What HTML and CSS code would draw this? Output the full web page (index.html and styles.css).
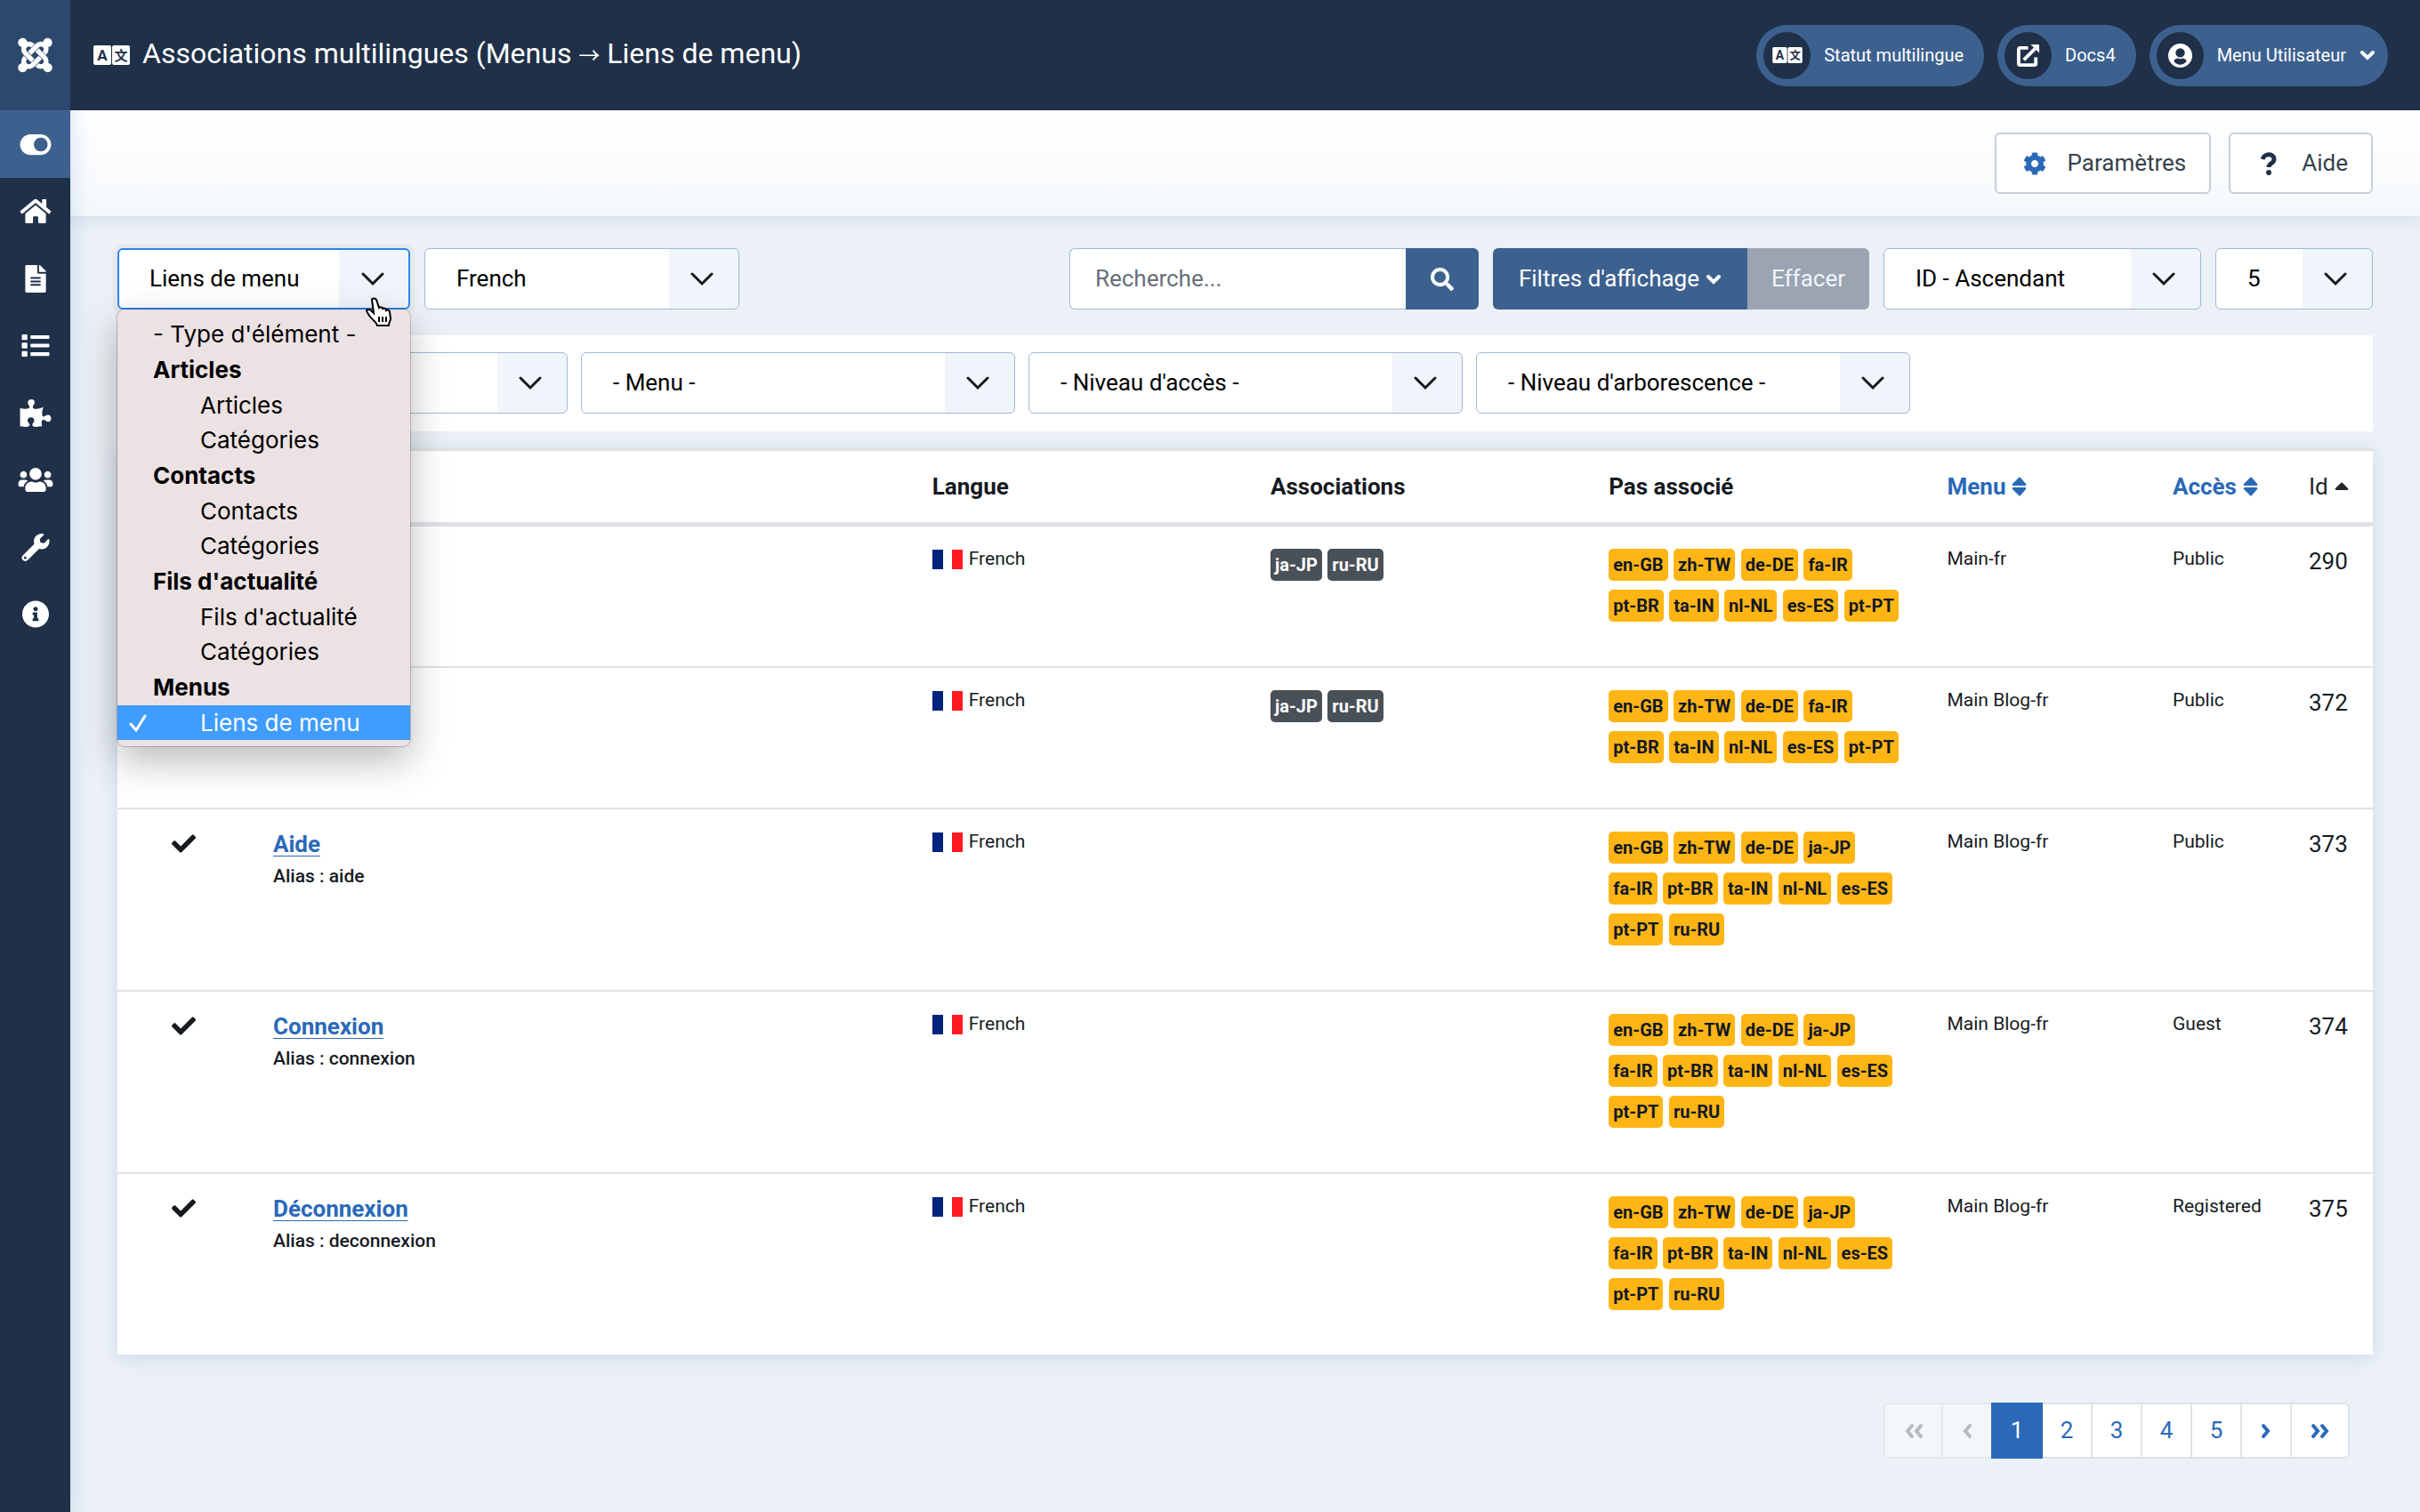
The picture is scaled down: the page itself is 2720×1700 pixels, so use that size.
FILE: index.html
```html
<!DOCTYPE html>
<html lang="fr">
<head>
  <meta charset="utf-8">
  <title>Associations multilingues</title>
  <link rel="stylesheet" href="styles.css">
</head>
<body>
  <!-- Icon definitions -->
  <svg class="sprite" aria-hidden="true">
    <symbol id="joomla" viewBox="0 0 448 512"><path d="M.6 92.1C.6 58.8 27.4 32 60.4 32c30 0 54.5 21.9 59.2 50.2 32.6-7.6 67.1.6 96.5 30l-44.3 44.3c-20.5-20.5-42.6-16.3-55.4-3.5-14.3 14.3-14.3 37.9 0 52.2l99.5 99.5-44 44.3c-87.7-87.2-49.7-49.7-99.8-99.7-26.8-26.5-35-64.8-24.8-98.9C20.4 144.6.6 120.7.6 92.1zm129.5 116.4l44.3 44.3c10-10 89.7-89.7 99.7-99.8 14.3-14.3 37.6-14.3 51.9 0 12.8 12.8 17 35-3.5 55.4l44 44.3c31.2-31.2 38.5-67.6 28.9-101.2 29.2-4.1 51.9-29.2 51.9-59.5 0-33.2-26.8-60.1-59.8-60.1-30.3 0-55.4 22.5-59.5 51.6-33.8-9.9-71.7-1.5-98.3 25.1-18.3 19.1-71.1 71.5-99.6 99.9zm266.3 152.2c8.2-32.7-.9-68.5-26.3-93.9-11.8-12.2 5 4.7-99.5-99.7l-44.3 44.3 99.7 99.7c14.3 14.3 14.3 37.6 0 51.9-12.8 12.8-35 17-55.4-3.5l-44 44.3c27.6 30.2 68 38.8 102.7 28 5.5 27.4 29.7 48.1 58.9 48.1 33 0 59.8-26.8 59.8-60.1 0-30.2-22.5-55-51.6-59.1zm-84.3-53.1l-44-44.3c-87 86.4-50.4 50.4-99.7 99.8-14.3 14.3-37.6 14.3-51.9 0-13.1-13.4-16.9-35.3 3.2-55.4l-44-44.3c-30.2 30.2-38 65.2-29.5 98.3-26.7 6-46.2 29.9-46.2 58.2C0 453.2 26.8 480 59.8 480c28.6 0 52.5-19.8 58.6-46.7 32.7 8.2 68.5-.6 94.2-26 32.1-32 12.2-12.4 99.5-99.7z"/></symbol>
    <symbol id="toggle" viewBox="0 0 576 512"><path d="M384 64H192C86 64 0 150 0 256s86 192 192 192h192c106 0 192-86 192-192S490 64 384 64zm0 320c-70.8 0-128-57.3-128-128 0-70.8 57.3-128 128-128 70.8 0 128 57.3 128 128 0 70.8-57.3 128-128 128z"/></symbol>
    <symbol id="home" viewBox="0 0 576 512"><path d="M280.37 148.26L96 300.11V464a16 16 0 0 0 16 16l112.06-.29a16 16 0 0 0 15.92-16V368a16 16 0 0 1 16-16h64a16 16 0 0 1 16 16v95.64a16 16 0 0 0 16 16.05L464 480a16 16 0 0 0 16-16V300L295.67 148.26a12.19 12.19 0 0 0-15.3 0zM571.6 251.47L488 182.56V44.05a12 12 0 0 0-12-12h-56a12 12 0 0 0-12 12v72.61L318.47 43a48 48 0 0 0-61 0L4.34 251.47a12 12 0 0 0-1.6 16.9l25.5 31A12 12 0 0 0 45.15 301l235.22-193.74a12.19 12.19 0 0 1 15.3 0L530.9 301a12 12 0 0 0 16.9-1.6l25.5-31a12 12 0 0 0-1.7-16.93z"/></symbol>
    <symbol id="file" viewBox="0 0 384 512"><path d="M224 136V0H24C10.7 0 0 10.7 0 24v464c0 13.3 10.7 24 24 24h336c13.3 0 24-10.7 24-24V160H248c-13.2 0-24-10.8-24-24zm64 236c0 6.6-5.4 12-12 12H108c-6.6 0-12-5.4-12-12v-8c0-6.6 5.4-12 12-12h168c6.6 0 12 5.4 12 12v8zm0-64c0 6.6-5.4 12-12 12H108c-6.6 0-12-5.4-12-12v-8c0-6.6 5.4-12 12-12h168c6.6 0 12 5.4 12 12v8zm0-72v8c0 6.6-5.4 12-12 12H108c-6.6 0-12-5.4-12-12v-8c0-6.6 5.4-12 12-12h168c6.6 0 12 5.4 12 12zm96-114.1v6.1H256V0h6.1c6.4 0 12.5 2.5 17 7l97.9 98c4.5 4.5 7 10.6 7 16.9z"/></symbol>
    <symbol id="list" viewBox="0 0 512 512"><rect y="48" width="104" height="104" rx="16"/><rect y="204" width="104" height="104" rx="16"/><rect y="360" width="104" height="104" rx="16"/><rect x="160" y="64" width="352" height="68" rx="16"/><rect x="160" y="222" width="352" height="68" rx="16"/><rect x="160" y="380" width="352" height="68" rx="16"/></symbol>
    <symbol id="puzzle" viewBox="0 0 576 512"><path d="M519.442 288.651c-41.519 0-59.5 31.593-82.058 31.593C377.409 320.244 432 144 432 144s-196.288 80-196.288-3.297c0-35.827 36.288-46.25 36.288-85.985C272 19.216 243.885 0 210.539 0c-34.654 0-66.366 18.891-66.366 56.346 0 41.364 31.711 59.277 31.711 81.75C175.885 207.719 0 166.758 0 166.758v333.237s178.635 41.047 178.635-28.662c0-22.473-40-40.107-40-81.471 0-37.456 29.25-56.346 63.577-56.346 33.673 0 61.788 19.216 61.788 54.717 0 39.735-36.288 50.158-36.288 85.985 0 60.803 129.675 25.73 181.23 25.73 0 0-34.725-120.101 25.827-120.101 35.962 0 46.423 36.152 86.308 36.152C556.712 416 576 387.99 576 354.443c0-34.199-18.962-65.792-56.558-65.792z"/></symbol>
    <symbol id="users" viewBox="0 0 640 512"><path d="M96 224c35.3 0 64-28.7 64-64s-28.7-64-64-64-64 28.7-64 64 28.7 64 64 64zm448 0c35.3 0 64-28.7 64-64s-28.7-64-64-64-64 28.7-64 64 28.7 64 64 64zm32 32h-64c-17.6 0-33.5 7.1-45.1 18.6 40.3 22.1 68.9 62 75.1 109.4h66c17.7 0 32-14.3 32-32v-32c0-35.3-28.7-64-64-64zm-256 0c61.9 0 112-50.1 112-112S381.9 32 320 32 208 82.1 208 144s50.1 112 112 112zm76.8 32h-8.3c-20.8 10-43.9 16-68.5 16s-47.6-6-68.5-16h-8.3C179.6 288 128 339.6 128 403.2V432c0 26.5 21.5 48 48 48h288c26.5 0 48-21.5 48-48v-28.8c0-63.6-51.6-115.2-115.2-115.2zm-223.7-13.4C161.5 263.1 145.6 256 128 256H64c-35.3 0-64 28.7-64 64v32c0 17.7 14.3 32 32 32h65.9c6.3-47.4 34.9-87.3 75.2-109.4z"/></symbol>
    <symbol id="wrench" viewBox="0 0 512 512"><path d="M507.73 109.1c-2.24-9.03-13.54-12.09-20.12-5.51l-74.36 74.36-67.88-11.31-11.31-67.88 74.36-74.36c6.62-6.62 3.43-17.9-5.66-20.16-47.38-11.74-99.55.91-136.58 37.93-39.64 39.64-50.55 97.1-34.05 147.2L18.74 402.76c-24.99 24.99-24.99 65.51 0 90.5 24.99 24.99 65.51 24.99 90.5 0l213.21-213.21c50.12 16.71 107.47 5.68 147.37-34.22 37.07-37.07 49.7-89.32 37.91-136.73zM64 472c-13.25 0-24-10.75-24-24 0-13.26 10.75-24 24-24s24 10.74 24 24c0 13.25-10.75 24-24 24z"/></symbol>
    <symbol id="info" viewBox="0 0 512 512"><path d="M256 8C119.043 8 8 119.083 8 256c0 136.997 111.043 248 248 248s248-111.003 248-248C504 119.083 392.957 8 256 8zm0 110c23.196 0 42 18.804 42 42s-18.804 42-42 42-42-18.804-42-42 18.804-42 42-42zm56 254c0 6.627-5.373 12-12 12h-88c-6.627 0-12-5.373-12-12v-24c0-6.627 5.373-12 12-12h12v-64h-12c-6.627 0-12-5.373-12-12v-24c0-6.627 5.373-12 12-12h64c6.627 0 12 5.373 12 12v100h12c6.627 0 12 5.373 12 12v24z"/></symbol>
    <symbol id="search" viewBox="0 0 512 512"><path d="M505 442.7L405.3 343c-4.5-4.5-10.6-7-17-7H372c27.6-35.3 44-79.7 44-128C416 93.1 322.9 0 208 0S0 93.1 0 208s93.1 208 208 208c48.3 0 92.7-16.4 128-44v16.3c0 6.4 2.5 12.5 7 17l99.7 99.7c9.4 9.4 24.6 9.4 33.9 0l28.3-28.3c9.4-9.4 9.4-24.6.1-34zM208 336c-70.7 0-128-57.2-128-128 0-70.7 57.2-128 128-128 70.7 0 128 57.2 128 128 0 70.7-57.2 128-128 128z"/></symbol>
    <symbol id="cog" viewBox="0 0 512 512"><path d="M487.4 315.7l-42.6-24.6c4.3-23.2 4.3-47 0-70.2l42.6-24.6c4.9-2.8 7.1-8.6 5.5-14-11.1-35.6-30-67.8-54.7-94.6-3.8-4.1-10-5.1-14.8-2.3L380.8 110c-17.9-15.4-38.5-27.3-60.8-35.1V25.8c0-5.6-3.9-10.5-9.4-11.7-36.7-8.2-74.3-7.8-109.2 0-5.5 1.2-9.4 6.1-9.4 11.7V75c-22.2 7.9-42.8 19.8-60.8 35.1L88.7 85.5c-4.9-2.8-11-1.9-14.8 2.3-24.7 26.7-43.6 58.9-54.7 94.6-1.7 5.4.6 11.2 5.5 14L67.3 221c-4.3 23.2-4.3 47 0 70.2l-42.6 24.6c-4.9 2.8-7.1 8.6-5.5 14 11.1 35.6 30 67.8 54.7 94.6 3.8 4.1 10 5.1 14.8 2.3l42.6-24.6c17.9 15.4 38.5 27.3 60.8 35.1v49.2c0 5.6 3.9 10.5 9.4 11.7 36.7 8.2 74.3 7.8 109.2 0 5.5-1.2 9.4-6.1 9.4-11.7v-49.2c22.2-7.9 42.8-19.8 60.8-35.1l42.6 24.6c4.9 2.8 11 1.9 14.8-2.3 24.7-26.7 43.6-58.9 54.7-94.6 1.5-5.5-.7-11.3-5.6-14.1zM256 336c-44.1 0-80-35.9-80-80s35.9-80 80-80 80 35.9 80 80-35.9 80-80 80z"/></symbol>
    <symbol id="question" viewBox="0 0 20 26"><path d="M3 8C5 1 16 1 16 8c0 5-6 4-6 9" fill="none" stroke="currentColor" stroke-width="5"/><circle cx="10" cy="23" r="3"/></symbol>
    <symbol id="check" viewBox="0 0 512 512"><path d="M173.898 439.404l-166.4-166.4c-9.997-9.997-9.997-26.206 0-36.204l36.203-36.204c9.997-9.998 26.207-9.998 36.204 0L192 312.69 432.095 72.596c9.997-9.997 26.207-9.997 36.204 0l36.203 36.204c9.997 9.997 9.997 26.206 0 36.204l-294.4 294.401c-9.998 9.997-26.207 9.997-36.204-.001z"/></symbol>
    <symbol id="external" viewBox="0 0 28 28"><path d="M14 5H5a2 2 0 0 0-2 2v16a2 2 0 0 0 2 2h16a2 2 0 0 0 2-2v-7M9 19L22 6" fill="none" stroke="currentColor" stroke-width="4"/><path d="M17 1h9a1 1 0 0 1 1 1v9z"/></symbol>
    <symbol id="user" viewBox="0 0 26 26"><path fill-rule="evenodd" d="M13 0a13 13 0 1 1 0 26 13 13 0 0 1 0-26zm0 5a5 5 0 1 0 0 10 5 5 0 0 0 0-10zm-7 14c4 5 10 5 14 0-1-2-3-3-5-3-1 1-3 1-4 0-2 0-4 1-5 3z"/></symbol>
    <symbol id="chevron" viewBox="0 0 16 12"><path d="M2 3l6 6 6-6" fill="none" stroke="currentColor" stroke-width="4" stroke-linecap="round"/></symbol>
    <symbol id="arrow" viewBox="0 0 26 16"><path d="M2 2l11 11L24 2" fill="none" stroke="currentColor" stroke-width="3" stroke-linecap="round"/></symbol>
    <symbol id="sort" viewBox="0 0 17 22"><path d="M8 1q1-1 2 0l6 7q1 2-1 2H2Q0 10 1 8zM8 21q1 1 2 0l6-7q1-2-1-2H2q-2 0-1 2z"/></symbol>
    <symbol id="sort-up" viewBox="0 0 16 10"><path d="M7 1q1-1 2 0l6 6q1 2-1 2H2Q0 9 1 7z"/></symbol>
    <symbol id="next" viewBox="0 0 12 20"><path d="M3 4l5 6-5 6" fill="none" stroke="currentColor" stroke-width="4" stroke-linecap="round"/></symbol>
    <symbol id="last" viewBox="0 0 22 20"><path d="M3 4l5 6-5 6M13 4l5 6-5 6" fill="none" stroke="currentColor" stroke-width="4" stroke-linecap="round"/></symbol>
    <symbol id="flag-fr" viewBox="0 0 34 22"><path fill="#00247d" d="M0 0h12v22H0z"/><path fill="#fff" d="M12 0h10v22H12z"/><path fill="#ff1a21" d="M22 0h12v22H22z"/></symbol>
  </svg>

  <div class="wrapper">
    <nav class="sidebar">
      <a class="logo" href="#" aria-label="Joomla"><svg><use href="#joomla"/></svg></a>
      <ul class="side-menu">
        <li class="toggle"><a href="#" aria-label="Basculer le menu"><svg><use href="#toggle"/></svg></a></li>
        <li><a href="#" aria-label="Accueil"><svg><use href="#home"/></svg></a></li>
        <li><a href="#" aria-label="Contenu"><svg><use href="#file"/></svg></a></li>
        <li><a href="#" aria-label="Menus"><svg><use href="#list"/></svg></a></li>
        <li><a href="#" aria-label="Composants"><svg><use href="#puzzle"/></svg></a></li>
        <li><a href="#" aria-label="Utilisateurs"><svg><use href="#users"/></svg></a></li>
        <li><a href="#" aria-label="Système"><svg><use href="#wrench"/></svg></a></li>
        <li><a href="#" aria-label="Informations"><svg><use href="#info"/></svg></a></li>
      </ul>
    </nav>

    <div class="page">
      <header class="header">
        <h1><svg class="icon-language" viewBox="0 0 41 22" aria-hidden="true"><rect width="20" height="22" rx="2"/><rect x="21" width="20" height="22" rx="2"/><text class="cut-latin" x="10" y="17">A</text><text class="cut-cjk" x="31" y="17">文</text></svg><span>Associations multilingues (Menus <span class="to">→</span> Liens de menu)</span></h1>
        <div class="header-items">
          <a class="pill" href="#"><span class="circle"><svg class="icon-pill-wide" viewBox="0 0 41 22" aria-hidden="true"><rect width="20" height="22" rx="2"/><rect x="21" width="20" height="22" rx="2"/><text class="cut-latin" x="10" y="17">A</text><text class="cut-cjk" x="31" y="17">文</text></svg></span>Statut multilingue</a>
          <a class="pill" href="#"><span class="circle"><svg class="icon-pill"><use href="#external"/></svg></span>Docs4</a>
          <button class="pill pill-user" type="button"><span class="circle"><svg class="icon-pill"><use href="#user"/></svg></span>Menu Utilisateur<svg class="icon-chevron"><use href="#chevron"/></svg></button>
        </div>
      </header>

      <div class="toolbar">
        <button class="btn-tool" type="button"><svg class="blue"><use href="#cog"/></svg>Paramètres</button>
        <button class="btn-tool" type="button"><svg><use href="#question"/></svg>Aide</button>
      </div>

      <main>
        <form class="filters">
          <div class="select w-type active">
            <select aria-label="Type d'élément"><option>Liens de menu</option></select>
            <svg><use href="#arrow"/></svg>
            <ul class="dropdown" role="listbox" aria-label="Type d'élément">
              <li role="option">- Type d'élément -</li>
              <li class="group">Articles</li>
              <li class="sub" role="option">Articles</li>
              <li class="sub" role="option">Catégories</li>
              <li class="group">Contacts</li>
              <li class="sub" role="option">Contacts</li>
              <li class="sub" role="option">Catégories</li>
              <li class="group">Fils d'actualité</li>
              <li class="sub" role="option">Fils d'actualité</li>
              <li class="sub" role="option">Catégories</li>
              <li class="group">Menus</li>
              <li class="sub selected" role="option" aria-selected="true"><svg viewBox="0 0 20 20"><path d="M2 11l6 7L18 2"/></svg>Liens de menu</li>
            </ul>
            <svg class="cursor" viewBox="0 0 30 34"><path d="M7 3c0-2 4-2 5 0l3 9c1-1 4-1 4 1 2-1 4 0 4 2 2-1 4 0 4 2l1 7c0 3-2 4-2 8H13c-1-4-5-6-8-10-2-3-4-5-4-7 1-2 4-1 6 1l2 2z"/><path d="M15 22v6M19 22v6M23 22v6"/></svg>
          </div>
          <div class="select w-lang">
            <select aria-label="Langue"><option>French</option></select>
            <svg><use href="#arrow"/></svg>
          </div>
          <div class="search">
            <input type="text" placeholder="Recherche..." aria-label="Recherche">
            <button type="submit" aria-label="Rechercher"><svg><use href="#search"/></svg></button>
          </div>
          <div class="btn-group">
            <button class="btn-filter" type="button">Filtres d'affichage<svg class="icon-chevron"><use href="#chevron"/></svg></button>
            <button class="btn-clear" type="button" disabled>Effacer</button>
          </div>
          <div class="select w-order">
            <select aria-label="Trier par"><option>ID - Ascendant</option></select>
            <svg><use href="#arrow"/></svg>
          </div>
          <div class="select w-limit">
            <select aria-label="Nombre par page"><option>5</option></select>
            <svg><use href="#arrow"/></svg>
          </div>
        </form>

        <div class="filter-box">
          <div class="select">
            <select aria-label="Statut"><option>- Statut -</option></select>
            <svg><use href="#arrow"/></svg>
          </div>
          <div class="select">
            <select aria-label="Menu"><option>- Menu -</option></select>
            <svg><use href="#arrow"/></svg>
          </div>
          <div class="select">
            <select aria-label="Niveau d'accès"><option>- Niveau d'accès -</option></select>
            <svg><use href="#arrow"/></svg>
          </div>
          <div class="select">
            <select aria-label="Niveau d'arborescence"><option>- Niveau d'arborescence -</option></select>
            <svg><use href="#arrow"/></svg>
          </div>
        </div>

        <table>
          <thead>
            <tr>
              <th class="col-status"></th>
              <th></th>
              <th class="col-15">Langue</th>
              <th class="col-15">Associations</th>
              <th class="col-15">Pas associé</th>
              <th class="col-10"><a href="#">Menu<svg class="icon-sort"><use href="#sort"/></svg></a></th>
              <th class="col-access"><a href="#">Accès<svg class="icon-sort"><use href="#sort"/></svg></a></th>
              <th class="col-id"><a href="#">Id<svg class="icon-sort-up"><use href="#sort-up"/></svg></a></th>
            </tr>
          </thead>
          <tbody>
            <tr>
              <td class="status"></td>
              <td></td>
              <td class="small"><svg class="flag"><use href="#flag-fr"/></svg>French</td>
              <td class="badges"><span class="badge dark">ja-JP</span> <span class="badge dark">ru-RU</span></td>
              <td class="badges"><span class="badge">en-GB</span> <span class="badge">zh-TW</span> <span class="badge">de-DE</span> <span class="badge">fa-IR</span> <span class="badge">pt-BR</span> <span class="badge">ta-IN</span> <span class="badge">nl-NL</span> <span class="badge">es-ES</span> <span class="badge">pt-PT</span></td>
              <td class="small">Main-fr</td>
              <td class="small">Public</td>
              <td>290</td>
            </tr>
            <tr>
              <td class="status"></td>
              <td></td>
              <td class="small"><svg class="flag"><use href="#flag-fr"/></svg>French</td>
              <td class="badges"><span class="badge dark">ja-JP</span> <span class="badge dark">ru-RU</span></td>
              <td class="badges"><span class="badge">en-GB</span> <span class="badge">zh-TW</span> <span class="badge">de-DE</span> <span class="badge">fa-IR</span> <span class="badge">pt-BR</span> <span class="badge">ta-IN</span> <span class="badge">nl-NL</span> <span class="badge">es-ES</span> <span class="badge">pt-PT</span></td>
              <td class="small">Main Blog-fr</td>
              <td class="small">Public</td>
              <td>372</td>
            </tr>
            <tr>
              <td class="status"><svg><use href="#check"/></svg></td>
              <td><a class="title" href="#">Aide</a><div class="alias">Alias : aide</div></td>
              <td class="small"><svg class="flag"><use href="#flag-fr"/></svg>French</td>
              <td></td>
              <td class="badges"><span class="badge">en-GB</span> <span class="badge">zh-TW</span> <span class="badge">de-DE</span> <span class="badge">ja-JP</span> <span class="badge">fa-IR</span> <span class="badge">pt-BR</span> <span class="badge">ta-IN</span> <span class="badge">nl-NL</span> <span class="badge">es-ES</span> <span class="badge">pt-PT</span> <span class="badge">ru-RU</span></td>
              <td class="small">Main Blog-fr</td>
              <td class="small">Public</td>
              <td>373</td>
            </tr>
            <tr>
              <td class="status"><svg><use href="#check"/></svg></td>
              <td><a class="title" href="#">Connexion</a><div class="alias">Alias : connexion</div></td>
              <td class="small"><svg class="flag"><use href="#flag-fr"/></svg>French</td>
              <td></td>
              <td class="badges"><span class="badge">en-GB</span> <span class="badge">zh-TW</span> <span class="badge">de-DE</span> <span class="badge">ja-JP</span> <span class="badge">fa-IR</span> <span class="badge">pt-BR</span> <span class="badge">ta-IN</span> <span class="badge">nl-NL</span> <span class="badge">es-ES</span> <span class="badge">pt-PT</span> <span class="badge">ru-RU</span></td>
              <td class="small">Main Blog-fr</td>
              <td class="small">Guest</td>
              <td>374</td>
            </tr>
            <tr>
              <td class="status"><svg><use href="#check"/></svg></td>
              <td><a class="title" href="#">Déconnexion</a><div class="alias">Alias : deconnexion</div></td>
              <td class="small"><svg class="flag"><use href="#flag-fr"/></svg>French</td>
              <td></td>
              <td class="badges"><span class="badge">en-GB</span> <span class="badge">zh-TW</span> <span class="badge">de-DE</span> <span class="badge">ja-JP</span> <span class="badge">fa-IR</span> <span class="badge">pt-BR</span> <span class="badge">ta-IN</span> <span class="badge">nl-NL</span> <span class="badge">es-ES</span> <span class="badge">pt-PT</span> <span class="badge">ru-RU</span></td>
              <td class="small">Main Blog-fr</td>
              <td class="small">Registered</td>
              <td>375</td>
            </tr>
          </tbody>
        </table>

        <nav class="pagination" aria-label="Pagination">
          <a class="wide disabled" href="#" aria-label="Début"><svg class="double flip"><use href="#last"/></svg></a>
          <a class="disabled" href="#" aria-label="Précédent"><svg class="flip"><use href="#next"/></svg></a>
          <a class="current" href="#">1</a>
          <a href="#">2</a>
          <a href="#">3</a>
          <a href="#">4</a>
          <a href="#">5</a>
          <a href="#" aria-label="Suivant"><svg><use href="#next"/></svg></a>
          <a class="wide" href="#" aria-label="Fin"><svg class="double"><use href="#last"/></svg></a>
        </nav>
      </main>
    </div>
  </div>
</body>
</html>
```
FILE: styles.css
```css
* {
  box-sizing: border-box;
}

body {
  margin: 0;
  font-family: Roboto, "Noto Sans CJK SC", sans-serif;
  font-size: 26px;
  line-height: 39px;
  color: #161a1f;
  background-color: #ebf1f6;
}

svg {
  fill: currentColor;
}

button,
input,
select {
  font: inherit;
  margin: 0;
}

a {
  color: #2a69b8;
  text-decoration: none;
}

ul {
  list-style: none;
  margin: 0;
  padding: 0;
}

.sprite {
  position: absolute;
  width: 0;
  height: 0;
}

.wrapper {
  display: flex;
  min-height: 100vh;
}

/* Sidebar */
.sidebar {
  position: relative;
  z-index: 1;
  flex: none;
  width: 79px;
  background-color: #1f3048;
  box-shadow: 0 0 26px rgba(42, 105, 184, 0.2);
}

.sidebar a {
  display: flex;
  align-items: center;
  justify-content: center;
  height: 100%;
  color: #fff;
}

.sidebar .logo {
  height: 124px;
  background-color: #2d486d;
}

.logo svg {
  width: 39px;
  height: 44px;
}

.side-menu li {
  height: 75px;
}

.side-menu li:nth-child(odd) {
  height: 76px;
}

.side-menu svg {
  width: 40px;
  height: 31px;
}

.side-menu .toggle {
  background-color: #3d618f;
}

/* Header */
.page {
  flex: 1;
  min-width: 0;
}

.header {
  position: relative;
  z-index: 2;
  display: flex;
  align-items: center;
  justify-content: space-between;
  height: 124px;
  padding: 0 36px 0 26px;
  background-color: #1f3048;
  color: #fff;
}

.header h1 {
  display: flex;
  align-items: center;
  gap: 14px;
  margin: 0;
  font-size: 32px;
  font-weight: 400;
}

.to {
  font-size: 24px;
}

.icon-language {
  width: 41px;
  height: 22px;
}

.cut-latin,
.cut-cjk {
  fill: #1f3048;
  text-anchor: middle;
  font-size: 17px;
  font-weight: 700;
}

.cut-cjk {
  font-family: "Noto Sans CJK SC", sans-serif;
  font-size: 15px;
}

.header-items {
  display: flex;
  gap: 15px;
}

.pill {
  display: flex;
  align-items: center;
  height: 69px;
  padding: 0 23px 0 8px;
  border: 0;
  border-radius: 35px;
  background-color: #3d618f;
  color: #fff;
  font-size: 20px;
}

.pill-user {
  padding-right: 15px;
}

.circle {
  display: flex;
  align-items: center;
  justify-content: center;
  width: 53px;
  height: 53px;
  margin-right: 15px;
  border-radius: 50%;
  background-color: #1f3048;
}

.icon-pill {
  width: 27px;
  height: 27px;
}

.icon-pill-wide {
  width: 34px;
  height: 18px;
}

.icon-chevron {
  width: 16px;
  height: 12px;
}

.pill-user .icon-chevron {
  margin-left: 16px;
}

/* Toolbar */
.toolbar {
  display: flex;
  justify-content: flex-end;
  gap: 20px;
  padding: 25px 53px 24px;
  background-image: linear-gradient(#fff, #f5f8fb);
  box-shadow: 0 4px 16px rgba(42, 80, 160, 0.12);
}

.btn-tool {
  display: flex;
  align-items: center;
  height: 69px;
  margin-bottom: 1px;
  padding: 0 26px 0 30px;
  border: 2px solid #c6cfda;
  border-radius: 6px;
  background-color: #fff;
  color: #35424c;
}

.btn-tool svg {
  width: 26px;
  height: 26px;
  margin-right: 24px;
  color: #1f3048;
}

.btn-tool .blue {
  color: #2a69b8;
}

main {
  padding: 36px 53px;
}

/* Filters */
.filters {
  display: flex;
  gap: 16px;
  margin-bottom: 29px;
}

.select {
  position: relative;
  display: grid;
  align-items: center;
}

.select select,
.select > svg {
  grid-area: 1 / 1;
}

.select select {
  appearance: none;
  width: 100%;
  height: 69px;
  padding: 0 90px 0 35px;
  border: 1px solid #a3b8d8;
  border-radius: 6px;
  background: linear-gradient(#f0f4fb, #f0f4fb) right / 78px 100% no-repeat #fff;
  color: #000;
}

.select > svg {
  justify-self: end;
  width: 26px;
  height: 16px;
  margin-right: 29px;
  pointer-events: none;
}

.active select {
  border: 2px solid #2a86f0;
  padding-left: 34px;
  box-shadow: 0 0 0 5px #e6e9ec;
}

.w-type {
  width: 329px;
}

.w-lang {
  width: 354px;
}

.w-order {
  width: 357px;
}

.w-limit {
  width: 177px;
}

.search {
  display: flex;
  height: 69px;
  margin-left: auto;
}

.search input {
  width: 378px;
  padding: 0 28px;
  border: 1px solid #a3b8d8;
  border-right: 0;
  border-radius: 6px 0 0 6px;
  background-color: #fff;
}

.search input::placeholder {
  color: #66707a;
}

.search button {
  display: flex;
  align-items: center;
  justify-content: center;
  width: 82px;
  border: 0;
  border-radius: 0 6px 6px 0;
  background-color: #3d618f;
  color: #fff;
}

.search svg {
  width: 26px;
  height: 26px;
}

.btn-group {
  display: flex;
}

.btn-filter,
.btn-clear {
  display: flex;
  align-items: center;
  height: 69px;
  padding: 0 30px 0 29px;
  border: 0;
}

.btn-filter {
  gap: 8px;
  border-radius: 6px 0 0 6px;
  background-color: #3d618f;
  color: #fff;
}

.btn-clear {
  padding: 0 27px;
  border-radius: 0 6px 6px 0;
  background-color: #9ba5b1;
  color: #f0f4fb;
}

.filter-box {
  display: flex;
  gap: 15px;
  margin-bottom: 19px;
  padding: 19px 18px 20px;
  background-color: #fff;
}

.filter-box .select {
  width: 488px;
}

/* Open list of item types */
.dropdown {
  position: absolute;
  top: 69px;
  left: 0;
  z-index: 2;
  width: 100%;
  padding: 8px 0 7px;
  border-radius: 8px;
  background-color: #ece2e3;
  box-shadow: 0 0 0 1px rgba(0, 0, 0, 0.2), 0 16px 44px rgba(0, 0, 0, 0.28);
  font-family: Inter, sans-serif;
  font-size: 26px;
  color: #000;
}

.dropdown li {
  display: flex;
  align-items: center;
  height: 39px;
  padding-left: 40px;
}

.dropdown .group {
  height: 41px;
  font-weight: 700;
}

.dropdown .sub {
  padding-left: 93px;
}

.dropdown .selected {
  padding-left: 13px;
  background-color: #409cff;
  color: #fff;
}

.dropdown svg {
  width: 20px;
  height: 20px;
  margin-right: 60px;
  fill: none;
  stroke: #fff;
  stroke-width: 3;
  stroke-linecap: round;
}

.select > .cursor {
  position: absolute;
  top: 55px;
  right: 20px;
  z-index: 3;
  width: 30px;
  height: 34px;
  margin: 0;
  fill: #fff;
  stroke: #000;
  stroke-width: 2;
}

/* Table */
table {
  width: 100%;
  table-layout: fixed;
  border-spacing: 0;
  background-color: #fff;
  box-shadow: 0 4px 20px rgba(42, 80, 160, 0.14);
}

th {
  height: 88px;
  padding: 0 13px;
  border-top: 3px solid #dee2e6;
  border-bottom: 5px solid #dee2e6;
  text-align: left;
  font-weight: 700;
}

.col-status {
  width: 162px;
}

.col-15 {
  width: 15%;
}

.col-10 {
  width: 10%;
}

.col-access {
  width: 153px;
}

.col-id {
  width: 85px;
}

.col-id a {
  color: #22262a;
  font-weight: 400;
}

.icon-sort {
  width: 17px;
  height: 22px;
  margin-left: 7px;
  vertical-align: -2px;
}

.icon-sort-up {
  width: 16px;
  height: 10px;
  margin-left: 7px;
  vertical-align: 4px;
}

td {
  padding: 20px 13px 0;
  border-bottom: 2px solid #dee2e6;
  vertical-align: top;
}

tbody tr:last-child td {
  border-bottom: 0;
}

.status {
  padding-right: 26px;
  text-align: center;
}

.status svg {
  width: 27px;
  height: 27px;
  vertical-align: -4px;
}

.title {
  font-weight: 700;
  text-decoration: underline;
  text-decoration-thickness: 1px;
  text-underline-offset: 4px;
}

.alias {
  font-size: 21px;
  line-height: 32px;
  font-weight: 500;
}

.small {
  font-size: 21px;
  line-height: 32px;
}

.flag {
  width: 34px;
  height: 22px;
  margin-right: 7px;
  vertical-align: -5px;
}

.badges {
  padding: 18px 34px 47px 13px;
  line-height: 46px;
}

.badge {
  display: inline-block;
  height: 36px;
  padding: 0 5px;
  border-radius: 5px;
  background-color: #ffb514;
  color: #111827;
  font-size: 20px;
  line-height: 36px;
  font-weight: 700;
  vertical-align: middle;
}

.badge.dark {
  background-color: #495057;
  color: #fff;
}

/* Pagination */
.pagination {
  display: flex;
  justify-content: flex-end;
  margin: 54px 26px 0 0;
}

.pagination a {
  display: flex;
  align-items: center;
  justify-content: center;
  width: 58px;
  height: 63px;
  margin-left: -2px;
  border: 2px solid #dee2e6;
  background-color: #fff;
}

.pagination .wide {
  width: 67px;
}

.pagination a:first-child {
  border-radius: 6px 0 0 6px;
}

.pagination a:last-child {
  border-radius: 0 6px 6px 0;
}

.pagination .current {
  z-index: 1;
  border-color: #2a69b8;
  background-color: #2a69b8;
  color: #fff;
}

.pagination .disabled {
  border-color: #e3e8ed;
  background-color: #f3f7fa;
  color: #b5bbc3;
}

.pagination svg {
  width: 12px;
  height: 20px;
}

.pagination .double {
  width: 22px;
}

.flip {
  transform: scaleX(-1);
}
```
